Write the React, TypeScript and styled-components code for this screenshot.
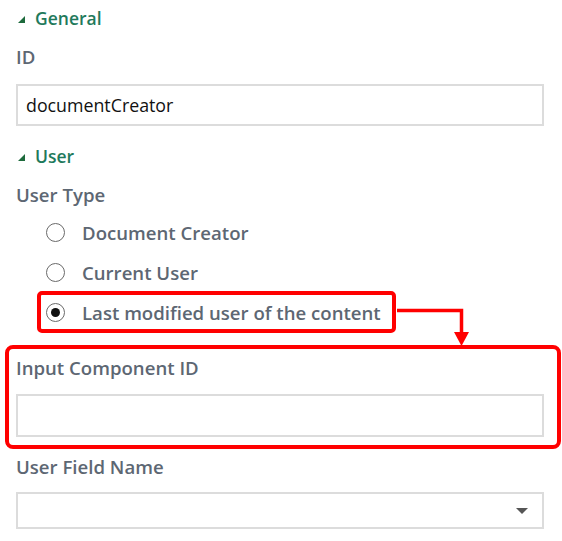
import React from "react";
import styled, { createGlobalStyle } from "styled-components";

const Global = createGlobalStyle`
  html, body { margin: 0; padding: 0; background: #ffffff; }
  body { font-family: "Open Sans", "Noto Sans", sans-serif; }
`;

const Panel = styled.div`
  position: relative;
  width: 562px;
  height: 541px;
  box-sizing: border-box;
  padding: 6px 18px 0 16px;
  display: flex;
  flex-direction: column;
  overflow: hidden;
`;

const SectionHeader = styled.div<{ $mt?: number }>`
  display: flex;
  align-items: center;
  height: 24px;
  margin-top: ${(p) => p.$mt ?? 0}px;
  color: #1f7a5c;
  font-size: 17.5px;
  font-weight: 600;
  gap: 10px;
  padding-left: 2px;
`;

const Caret = styled.span`
  width: 0;
  height: 0;
  border-left: 7px solid transparent;
  border-bottom: 7px solid #1d6a3c;
  margin-top: 2px;
`;

const Label = styled.div<{ $mt: number }>`
  height: 24px;
  line-height: 24px;
  margin-top: ${(p) => p.$mt}px;
  color: #5d6773;
  font-size: 18.6px;
  font-weight: 600;
  white-space: nowrap;
`;

const TextInput = styled.div<{ $mt: number; $h: number }>`
  box-sizing: border-box;
  height: ${(p) => p.$h}px;
  margin-top: ${(p) => p.$mt}px;
  border: 2px solid #dcdcdc;
  display: flex;
  align-items: center;
  padding: 0 8px;
  font-size: 17.8px;
  color: #111;
  position: relative;
`;

const DropArrow = styled.span`
  position: absolute;
  right: 14px;
  top: 50%;
  margin-top: -3px;
  width: 0;
  height: 0;
  border-left: 6px solid transparent;
  border-right: 6px solid transparent;
  border-top: 6px solid #555;
`;

const RadioGroup = styled.div`
  display: flex;
  flex-direction: column;
  margin-top: 5px;
  padding-left: 30px;
`;

const RadioRow = styled.div`
  position: relative;
  display: flex;
  align-items: center;
  height: 40px;
  gap: 17px;
  color: #5d6773;
  font-size: 18.6px;
  font-weight: 600;
  align-self: flex-start;
  white-space: nowrap;
`;

const Circle = styled.span<{ $checked?: boolean }>`
  box-sizing: border-box;
  width: 19px;
  height: 19px;
  border-radius: 50%;
  border: 1.5px solid #6a6a6a;
  background: #fff;
  display: flex;
  align-items: center;
  justify-content: center;
  &::after {
    content: "";
    display: ${(p) => (p.$checked ? "block" : "none")};
    width: 9px;
    height: 9px;
    border-radius: 50%;
    background: #111;
  }
`;

const Highlight = styled.span`
  position: absolute;
  left: -9px;
  right: -15px;
  top: -1px;
  bottom: -1px;
  border: 4px solid #ff0000;
  border-radius: 5px;
  pointer-events: none;
`;

const Callout = styled.div`
  margin: 13px -17px 0 -11px;
  padding: 7px 13px 8px 7px;
  border: 4px solid #ff0000;
  border-radius: 8px;
  display: flex;
  flex-direction: column;
`;

const Connector = styled.svg`
  position: absolute;
  left: 397px;
  top: 306px;
`;

export default function App() {
  return (
    <>
      <Global />
      <Panel>
        <SectionHeader>
          <Caret />
          General
        </SectionHeader>
        <Label $mt={15}>ID</Label>
        <TextInput $mt={15} $h={42}>documentCreator</TextInput>

        <SectionHeader $mt={18}>
          <Caret />
          User
        </SectionHeader>
        <Label $mt={15}>User Type</Label>
        <RadioGroup>
          <RadioRow>
            <Circle />
            Document Creator
          </RadioRow>
          <RadioRow>
            <Circle />
            Current User
          </RadioRow>
          <RadioRow>
            <Circle $checked />
            Last modified user of the content
            <Highlight />
          </RadioRow>
        </RadioGroup>

        <Callout>
          <Label $mt={0}>Input Component ID</Label>
          <TextInput $mt={14} $h={43} />
        </Callout>

        <Label $mt={6}>User Field Name</Label>
        <TextInput $mt={13} $h={37}>
          <DropArrow />
        </TextInput>

        <Connector width="80" height="44" viewBox="0 0 80 44">
          <polyline
            points="0,4.5 64.5,4.5 64.5,26"
            fill="none"
            stroke="#ff0000"
            strokeWidth="3.5"
          />
          <polygon points="57,26 72,26 64.5,40" fill="#ff0000" />
        </Connector>
      </Panel>
    </>
  );
}
